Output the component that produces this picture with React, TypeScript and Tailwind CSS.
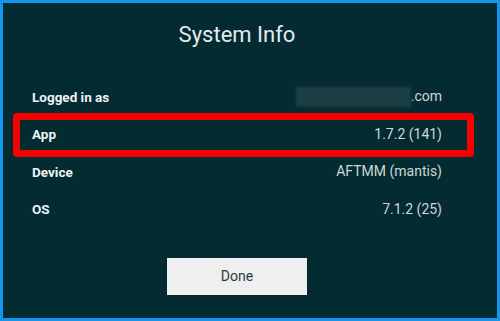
import React from 'react';

const rows = [
  { label: 'Logged in as', value: '.com', masked: true },
  { label: 'App', value: '1.7.2 (141)' },
  { label: 'Device', value: 'AFTMM (mantis)' },
  { label: 'OS', value: '7.1.2 (25)' },
];

export default function App() {
  return (
    <div
      className="relative w-[500px] h-[321px] overflow-hidden border-[3px] border-[#1695ef] bg-[#042b32] flex flex-col"
      style={{ fontFamily: 'Roboto, "Noto Sans", sans-serif' }}
    >
      {/* Title */}
      <div className="pt-[18px] pl-[29px] pr-[55px] text-center text-[22px] leading-[28px] text-[#e4eaeb]">
        System Info
      </div>

      {/* Info rows */}
      <div className="mt-[29px] pl-[29px] pr-[55px] flex flex-col">
        {rows.map((r) => (
          <div key={r.label} className="h-[37.5px] flex items-center justify-between">
            <span className="font-bold text-[13.5px] text-[#eef2f3]">{r.label}</span>
            <span className="flex items-center text-[14px] text-[#cfd6d7]">
              {r.masked && <span className="inline-block w-[115px] h-[20px] bg-[#1d3f44] blur-[1.5px]" />}
              {r.value}
            </span>
          </div>
        ))}
      </div>

      {/* Done button */}
      <div className="mt-[30px] pl-[29px] pr-[55px] flex justify-center">
        <button className="w-[140px] h-[37px] bg-[#eeefee] text-[#24403f] text-[14px] shadow-sm">
          Done
        </button>
      </div>

      {/* Red highlight annotation */}
      <div className="absolute left-[10px] top-[110px] w-[461px] h-[44px] border-[7px] border-[#f70000] rounded-[4px] pointer-events-none" />
    </div>
  );
}
